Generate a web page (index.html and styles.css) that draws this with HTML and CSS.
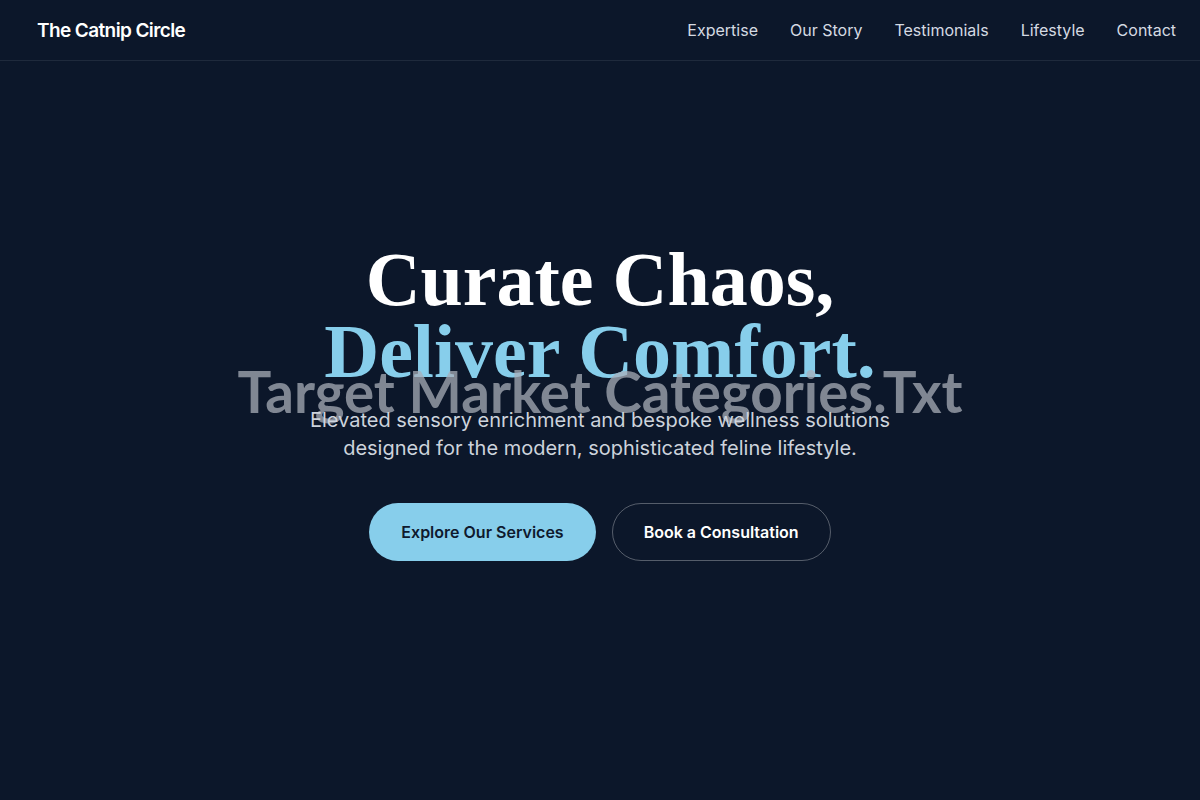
FILE: index.html
```html
<!DOCTYPE html>
<html lang="en">
<head>
<meta charset="utf-8">
<title>The Catnip Circle</title>
<link rel="stylesheet" href="styles.css">
</head>
<body>
<header class="nav">
  <a class="logo" href="#">The Catnip Circle</a>
  <nav class="links">
    <a href="#">Expertise</a>
    <a href="#">Our Story</a>
    <a href="#">Testimonials</a>
    <a href="#">Lifestyle</a>
    <a href="#">Contact</a>
  </nav>
</header>
<main class="hero">
  <div class="hero-inner">
    <h1 class="title"><span class="line1">Curate Chaos,</span><span class="line2">Deliver Comfort.</span></h1>
    <div class="overlay-label">Target Market Categories.Txt</div>
    <p class="subtitle">Elevated sensory enrichment and bespoke wellness solutions designed for the modern, sophisticated feline lifestyle.</p>
    <div class="actions">
      <a class="btn btn-primary" href="#">Explore Our Services</a>
      <a class="btn btn-outline" href="#">Book a Consultation</a>
    </div>
  </div>
</main>
</body>
</html>
```
FILE: styles.css
```css
* { box-sizing: border-box; }
html, body { margin: 0; padding: 0; }
body {
  background: #0c172a;
  color: #ffffff;
  font-family: Inter, "Noto Sans", sans-serif;
  height: 800px;
  overflow: hidden;
}
a { text-decoration: none; color: inherit; }

.nav {
  height: 61px;
  display: flex;
  align-items: center;
  justify-content: space-between;
  padding: 0 24px 0 37px;
  border-bottom: 1px solid #1f2a3c;
}
.logo {
  font-size: 19px;
  font-weight: 600;
  letter-spacing: -0.6px;
  color: #ffffff;
}
.links {
  display: flex;
  gap: 32px;
}
.links a {
  font-size: 16px;
  color: #d5dae2;
}

.hero {
  display: flex;
  justify-content: center;
  padding-top: 182px;
}
.hero-inner {
  position: relative;
  display: flex;
  flex-direction: column;
  align-items: center;
  text-align: center;
}
.title {
  margin: 0;
  font-family: "Liberation Serif", "Times New Roman", serif;
  font-weight: 700;
  font-size: 76px;
  line-height: 72px;
  display: flex;
  flex-direction: column;
  position: relative;
  z-index: 1;
}
.line1 { color: #ffffff; }
.line2 { color: #87ceeb; }

.overlay-label {
  position: absolute;
  left: 50%;
  top: 118px;
  transform: translateX(-50%);
  white-space: nowrap;
  font-family: Lato, "Noto Sans", sans-serif;
  font-weight: 700;
  font-size: 56.5px;
  line-height: 60px;
  color: rgba(168, 174, 185, 0.74);
  z-index: 2;
  pointer-events: none;
}

.subtitle {
  position: relative;
  z-index: 3;
  margin: 19px 0 0;
  width: 620px;
  font-size: 20px;
  line-height: 28px;
  color: #cdd3dc;
}

.actions {
  display: flex;
  gap: 16px;
  margin-top: 41px;
}
.btn {
  display: inline-block;
  border-radius: 999px;
  padding: 17px 32px;
  font-size: 16px;
  line-height: 24px;
  font-weight: 600;
}
.btn-primary {
  background: #87ceeb;
  color: #0f1a2e;
}
.btn-outline {
  border: 1px solid rgba(255, 255, 255, 0.3);
  padding: 16px 31px;
  color: #ffffff;
}
```
